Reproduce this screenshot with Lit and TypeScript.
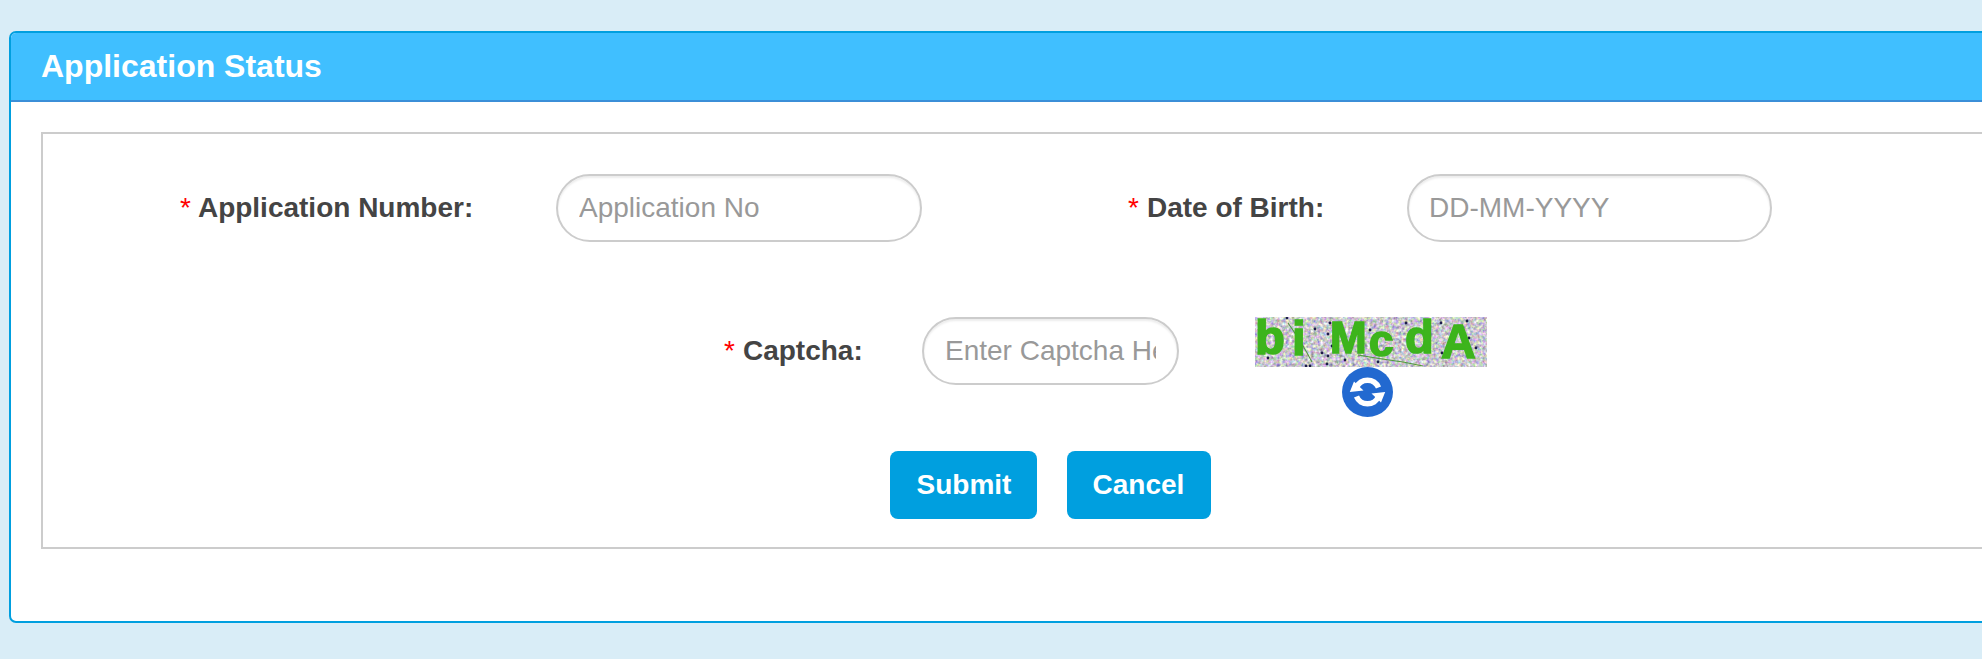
import { LitElement, html, css, svg } from "lit";
import { customElement } from "lit/decorators.js";

const DOTS: [number, number][] = [
  [32, 1], [60, 12], [75, 6], [73, 17], [77, 29], [67, 36], [73, 39], [72, 47], [90, 43], [13, 41], [51, 49], [55, 49],
  [151, 6], [186, 6], [212, 4], [214, 21], [221, 31], [187, 36], [129, 35], [123, 45], [115, 13],
];

const LETTERS: { c: string; x: number; y: number; s: number }[] = [
  { c: "b", x: 0, y: 37, s: 49 },
  { c: "i", x: 37, y: 38, s: 49 },
  { c: "M", x: 75, y: 36, s: 44 },
  { c: "c", x: 114, y: 39, s: 44 },
  { c: "d", x: 150, y: 36, s: 47 },
  { c: "A", x: 186, y: 41, s: 48 },
];

function captcha() {
  return html`<svg class="captcha" width="232" height="50" viewBox="0 0 232 50">
    <defs>
      <filter id="noise" x="0" y="0" width="100%" height="100%" color-interpolation-filters="sRGB">
        <feTurbulence type="fractalNoise" baseFrequency="0.32" numOctaves="2" seed="7" />
        <feColorMatrix
          type="matrix"
          values="0.7 0.3 0 0 0.29  0.25 0.75 0 0 0.28  0.3 0.1 0.6 0 0.31  0 0 0 0 1"
        />
        <feGaussianBlur stdDeviation="0.4" />
      </filter>
      <filter id="soft"><feGaussianBlur stdDeviation="0.55" /></filter>
    </defs>
    <rect width="232" height="50" filter="url(#noise)" />
    <g filter="url(#soft)">
      ${DOTS.map(([x, y]) => svg`<circle cx=${x} cy=${y} r="1.4" fill="#1d1d48" />`)}
      <path d="M33 6 Q46 24 57 45 M103 38 Q125 42 148 45 L168 49" fill="none" stroke="#4f9a3c" stroke-width="1.1" />
      <g class="cap-text">
        ${LETTERS.map((l) => svg`<text x=${l.x} y=${l.y} font-size=${l.s}>${l.c}</text>`)}
      </g>
    </g>
  </svg>`;
}

@customElement("app-root")
export class AppRoot extends LitElement {
  static styles = css`
    :host {
      display: block;
      width: 100%;
      height: 659px;
      overflow: hidden;
      background: #d9edf7;
      font-family: "Liberation Sans", Arial, sans-serif;
    }
    .page {
      width: 2100px;
      box-sizing: border-box;
      padding: 31px 9px 36px;
    }
    .card {
      border: 2px solid #009fdf;
      border-radius: 7px;
      background: #fff;
      overflow: hidden;
    }
    .head {
      height: 67px;
      display: flex;
      align-items: center;
      padding-left: 30px;
      background: #40bfff;
      border-bottom: 2px solid #3b8fd8;
    }
    h1 {
      margin: 0;
      font-size: 32px;
      font-weight: 700;
      color: #fff;
    }
    .body {
      padding: 30px 30px 72px;
    }
    .box {
      border: 2px solid #ccc;
      padding: 40px 0 28px;
      display: flex;
      flex-direction: column;
    }
    .row {
      display: flex;
      align-items: flex-start;
    }
    .row.one {
      padding-left: 137px;
      margin-bottom: 75px;
    }
    .row.two {
      padding-left: 681px;
      margin-bottom: 34px;
    }
    label {
      display: flex;
      align-items: center;
      height: 68px;
      font-size: 28px;
      font-weight: 700;
      color: #444;
      white-space: nowrap;
    }
    label .req {
      color: #f00;
      font-weight: 400;
      margin-right: 7px;
    }
    .l2 .req,
    .l3 .req {
      margin-right: 8px;
    }
    .l1 { width: 376px; }
    .l2 { width: 279px; margin-left: 206px; }
    .l3 { width: 198px; }
    input {
      box-sizing: border-box;
      height: 68px;
      border: 2px solid #ccc;
      border-radius: 34px;
      padding: 0 21px;
      font: 28px "Liberation Sans", Arial, sans-serif;
      color: #444;
      background: #fff;
      outline: none;
      box-shadow: inset 0 2px 2px rgba(0, 0, 0, 0.075);
    }
    input::placeholder {
      color: #999;
      opacity: 1;
    }
    .wide { width: 366px; }
    .dob { width: 365px; padding-left: 20px; }
    .narrow { width: 257px; }
    .cap {
      margin-left: 76px;
      width: 232px;
      display: flex;
      flex-direction: column;
      align-items: center;
    }
    .captcha {
      display: block;
    }
    .cap-text {
      font-family: "Liberation Sans", sans-serif;
      font-weight: 700;
      fill: #3cb41b;
      stroke: #3cb41b;
      stroke-width: 1.6px;
    }
    .refresh {
      width: 51px;
      height: 50px;
      border-radius: 50%;
      background: #2269d0;
      border: 0;
      padding: 0;
      display: block;
      margin-right: 7px;
    }
    .refresh svg {
      display: block;
    }
    .actions {
      display: flex;
      justify-content: center;
      gap: 30px;
    }
    .btn {
      height: 68px;
      border: 0;
      border-radius: 8px;
      background: #009fdf;
      color: #fff;
      font: 700 28px "Liberation Sans", Arial, sans-serif;
      padding: 0;
    }
    .submit { width: 147px; padding-left: 2px; }
    .cancel { width: 144px; }
  `;

  render() {
    return html`<div class="page">
      <section class="card">
        <header class="head"><h1>Application Status</h1></header>
        <div class="body">
          <div class="box">
            <div class="row one">
              <label class="l1"><span class="req">*</span>Application Number:</label>
              <input class="wide" placeholder="Application No" />
              <label class="l2"><span class="req">*</span>Date of Birth:</label>
              <input class="dob" placeholder="DD-MM-YYYY" />
            </div>
            <div class="row two">
              <label class="l3"><span class="req">*</span>Captcha:</label>
              <input class="narrow" placeholder="Enter Captcha Here" />
              <div class="cap">
                ${captcha()}
                <button class="refresh" aria-label="Refresh captcha">
                  <svg width="51" height="50" viewBox="0 0 51 50" fill="#fff">
                    <path d="M36.5 20.5A11.9 11.9 0 0 0 14.5 20.5M14.5 29.5A11.9 11.9 0 0 0 36.5 29.5" fill="none" stroke="#fff" stroke-width="5.5" />
                    <path d="M7.8 25L12 14.5L21.5 23.5ZM43.2 25L39 35.5L29.5 26.5Z" />
                  </svg>
                </button>
              </div>
            </div>
            <div class="actions">
              <button class="btn submit">Submit</button>
              <button class="btn cancel">Cancel</button>
            </div>
          </div>
        </div>
      </section>
    </div>`;
  }
}
